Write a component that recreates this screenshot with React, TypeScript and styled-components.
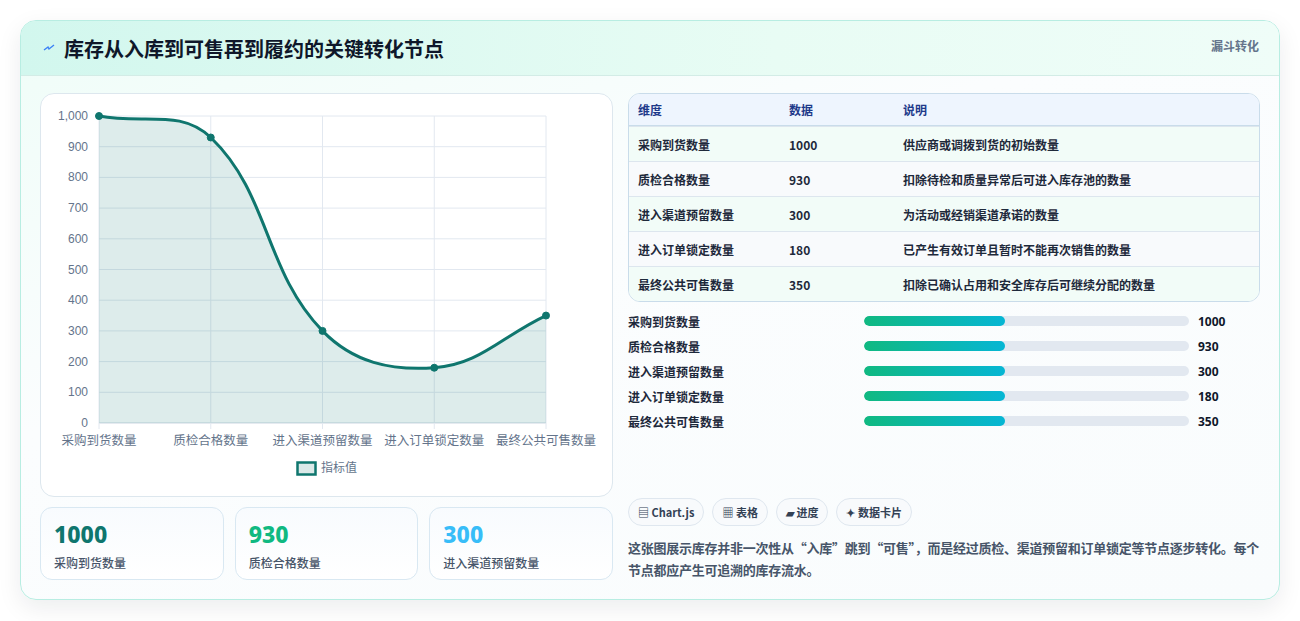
import React from "react";
import styled, { createGlobalStyle } from "styled-components";

const G = createGlobalStyle`
  body{margin:0;background:#f7f9fa;font-family:"Noto Sans CJK SC","Noto Sans",sans-serif;}
`;
const Page = styled.div`padding:20px 20px 21px 20px;height:621px;box-sizing:border-box;background:#fff;`;
const Card = styled.div`border:1px solid #b8ede2;border-radius:16px;overflow:hidden;height:580px;box-sizing:border-box;
  background:linear-gradient(160deg,#effdf8,#fbfdfe 40%,#f9fcfd);box-shadow:0 8px 24px rgba(15,23,42,.08);display:flex;flex-direction:column;`;
const Header = styled.div`height:55px;flex:none;box-sizing:border-box;border-bottom:1px solid #d3ece6;background:linear-gradient(90deg,#d2f7ee,#e8fcf4 60%,#effdf8);
  display:flex;align-items:center;justify-content:space-between;padding:0 20px 0 22px;`;
const Title = styled.h1`margin:0;font-size:20px;font-weight:700;color:#0f172a;display:flex;align-items:center;gap:9px;`;
const Tag = styled.span`font-size:12px;font-weight:700;color:#64748b;align-self:flex-start;margin-top:16px;`;
const Body = styled.div`display:grid;grid-template-columns:573px 1fr;gap:15px;padding:17px 19px 18px 19px;flex:1;`;
const Col = styled.div`display:flex;flex-direction:column;`;
const ChartBox = styled.div`height:404px;box-sizing:border-box;border:1px solid #dde7ee;border-radius:14px;background:#fff;`;
const Stats = styled.div`display:grid;grid-template-columns:repeat(3,1fr);gap:11px;margin-top:10px;`;
const Stat = styled.div`height:73px;box-sizing:border-box;border:1px solid #d9e8f2;border-radius:12px;background:linear-gradient(180deg,#f8fbfe,#fff);padding:11px 13px;`;
const StatNum = styled.div<{c:string}>`font-size:23px;font-weight:800;color:${p=>p.c};line-height:30px;font-family:"Noto Sans","Noto Sans CJK SC",sans-serif;`;
const StatLbl = styled.div`font-size:12px;color:#475569;margin-top:5px;font-weight:500;`;
const Table = styled.div`border:1px solid #c9dcea;border-radius:12px;overflow:hidden;background:#fff;`;
const Row = styled.div<{h?:boolean;alt?:boolean}>`display:grid;grid-template-columns:151px 114px 1fr;align-items:center;padding:0 9px;
  height:${p=>p.h?32:35}px;box-sizing:border-box;font-size:12px;font-weight:${p=>p.h?700:600};
  color:${p=>p.h?"#1e3a8a":"#1e293b"};background:${p=>p.h?"#eef5fe":p.alt?"#f8fafc":"#f2fcf8"};
  border-top:${p=>p.h?"none":"1px solid #dde6ee"};${p=>p.h?"border-bottom:1px solid #c9dcea;":""}`;
const Bars = styled.div`display:flex;flex-direction:column;gap:7px;margin-top:10px;`;
const BarRow = styled.div`display:grid;grid-template-columns:227px 325px auto;align-items:center;column-gap:9px;font-size:12px;color:#1e293b;font-weight:600;height:18px;`;
const Track = styled.div`height:10px;border-radius:5px;background:#e2e8f0;overflow:hidden;`;
const Fill = styled.div`height:100%;border-radius:5px;background:linear-gradient(90deg,#10b981,#06b6d4);`;
const Val = styled.span`font-size:12px;font-weight:700;color:#0f172a;font-family:"Noto Sans",sans-serif;`;
const Chips = styled.div`display:flex;gap:8px;margin-top:auto;`;
const Chip = styled.span`height:28px;box-sizing:border-box;padding:0 9px;border:1px solid #dfe7ef;border-radius:14px;background:#f8fafc;
  display:inline-flex;align-items:center;gap:4px;font-size:11px;font-weight:700;color:#334155;`;
const Desc = styled.p`margin:11px 0 0;font-size:13px;letter-spacing:-0.25px;line-height:22px;color:#475569;font-weight:600;`;

const labels=["采购到货数量","质检合格数量","进入渠道预留数量","进入订单锁定数量","最终公共可售数量"];
const vals=[1000,930,300,180,350];
const descs=["供应商或调拨到货的初始数量","扣除待检和质量异常后可进入库存池的数量","为活动或经销渠道承诺的数量","已产生有效订单且暂时不能再次销售的数量","扣除已确认占用和安全库存后可继续分配的数量"];

function Chart(){
  const x0=58,x1=505,y0=22,y1=329;
  const xs=labels.map((_,i)=>x0+(x1-x0)*i/4);
  const ys=vals.map(v=>y1-(y1-y0)*v/1000);
  const pts=xs.map((x,i)=>[x,ys[i]]);
  const cps=pts.map((p,i)=>{
    const a=pts[i-1]||p,b=pts[i+1]||p;
    const d01=Math.hypot(p[0]-a[0],p[1]-a[1]),d12=Math.hypot(b[0]-p[0],b[1]-p[1]);
    const s=d01+d12||1;const fa=.4*d01/s,fb=.4*d12/s;
    return {pr:[p[0]-fa*(b[0]-a[0]),p[1]-fa*(b[1]-a[1])],nx:[p[0]+fb*(b[0]-a[0]),p[1]+fb*(b[1]-a[1])]};
  });
  let d=`M${pts[0][0]},${pts[0][1]}`;
  for(let i=1;i<pts.length;i++){d+=` C${cps[i-1].nx[0]},${cps[i-1].nx[1]} ${cps[i].pr[0]},${cps[i].pr[1]} ${pts[i][0]},${pts[i][1]}`;}
  const area=d+` L${x1},${y1} L${x0},${y1} Z`;
  const ticks=[0,100,200,300,400,500,600,700,800,900,1000];
  return(
    <svg width="571" height="402" viewBox="0 0 571 402" fontFamily='"Noto Sans CJK SC","Noto Sans",sans-serif'>
      {ticks.map(t=>{const y=y1-(y1-y0)*t/1000;return(<g key={t}>
        <line x1={x0} x2={x1} y1={y} y2={y} stroke={t===0?"#cbd5e1":"#e2e8f0"}/>
        <text x={47} y={y+4} fontSize="12" fill="#64748b" textAnchor="end" fontFamily='"Liberation Sans",sans-serif'>{t===1000?"1,000":t}</text></g>);})}
      {xs.map((x,i)=><line key={i} x1={x} x2={x} y1={y0} y2={y1+6} stroke="#e2e8f0"/>)}
      <path d={area} fill="rgba(15,118,110,0.14)"/>
      <path d={d} fill="none" stroke="#0f766e" strokeWidth="3"/>
      {pts.map((p,i)=><circle key={i} cx={p[0]} cy={p[1]} r="3.5" fill="#0f766e" stroke="#0f766e"/>)}
      {xs.map((x,i)=><text key={i} x={x} y={351} fontSize="12.5" fill="#64748b" textAnchor="middle">{labels[i]}</text>)}
      <rect x="256.5" y="368.5" width="18" height="12" fill="#dbe9e8" stroke="#0f766e" strokeWidth="2.5"/>
      <text x="280" y="378" fontSize="12" fill="#64748b">指标值</text>
    </svg>
  );
}

export default function App(){
  return(<Page><G/><Card>
    <Header>
      <Title><svg width="12" height="10" viewBox="0 0 12 10"><path d="M1 7 L5 4 L6 6 L11 2" fill="none" stroke="#3b82f6" strokeWidth="1.4"/></svg>库存从入库到可售再到履约的关键转化节点</Title>
      <Tag>漏斗转化</Tag>
    </Header>
    <Body>
      <Col>
        <ChartBox><Chart/></ChartBox>
        <Stats>
          <Stat><StatNum c="#0f766e">1000</StatNum><StatLbl>采购到货数量</StatLbl></Stat>
          <Stat><StatNum c="#10b981">930</StatNum><StatLbl>质检合格数量</StatLbl></Stat>
          <Stat><StatNum c="#38bdf8">300</StatNum><StatLbl>进入渠道预留数量</StatLbl></Stat>
        </Stats>
      </Col>
      <Col>
        <Table>
          <Row h><span>维度</span><span>数据</span><span>说明</span></Row>
          {labels.map((l,i)=><Row key={l} alt={i%2===1}><span>{l}</span><span>{vals[i]}</span><span>{descs[i]}</span></Row>)}
        </Table>
        <Bars>
          {labels.map((l,i)=><BarRow key={l}><span>{l}</span><Track><Fill style={{width:"43.5%"}}/></Track><Val>{vals[i]}</Val></BarRow>)}
        </Bars>
        <Chips>
          <Chip>▤ Chart.js</Chip><Chip>▦ 表格</Chip><Chip>▰ 进度</Chip><Chip>✦ 数据卡片</Chip>
        </Chips>
        <Desc>这张图展示库存并非一次性从“入库”跳到“可售”，而是经过质检、渠道预留和订单锁定等节点逐步转化。每个节点都应产生可追溯的库存流水。</Desc>
      </Col>
    </Body>
  </Card></Page>);
}
